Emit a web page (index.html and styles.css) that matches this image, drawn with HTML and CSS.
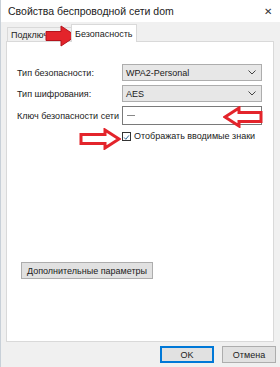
FILE: index.html
```html
<!DOCTYPE html>
<html lang="ru">
<head>
  <meta charset="UTF-8" />
  <title>Свойства беспроводной сети dom</title>
  <link rel="stylesheet" href="styles.css">
</head>
<body>
  <div class="window">
    <div class="titlebar">
      <span class="title">Свойства беспроводной сети dom</span>
      <span class="close">&#x2715;</span>
    </div>

    <div class="tabs">
      <div class="tab">Подключение</div>
      <div class="tab selected">Безопасность</div>
    </div>

    <div class="panel">
      <div class="form">
        <label class="label">Тип безопасности:</label>
        <div class="select">
          <span>WPA2-Personal</span>
          <svg class="chevron" width="8" height="5" viewBox="0 0 8 5"><path d="M0.5 0.5 L4 4 L7.5 0.5" fill="none" stroke="#444" stroke-width="1"/></svg>
        </div>

        <label class="label">Тип шифрования:</label>
        <div class="select">
          <span>AES</span>
          <svg class="chevron" width="8" height="5" viewBox="0 0 8 5"><path d="M0.5 0.5 L4 4 L7.5 0.5" fill="none" stroke="#444" stroke-width="1"/></svg>
        </div>

        <label class="label">Ключ безопасности сети</label>
        <div class="input"><span class="masked"></span></div>

        <div></div>
        <div class="check-row">
          <span class="checkbox">
            <svg width="9" height="9" viewBox="0 0 9 9"><path d="M1.5 4.5 L3.6 6.8 L7.6 1.8" fill="none" stroke="#1e5a8a" stroke-width="1.2"/></svg>
          </span>
          <span>Отображать вводимые знаки</span>
        </div>
      </div>

      <button class="btn advanced">Дополнительные параметры</button>
    </div>

    <div class="footer">
      <button class="btn default">OK</button>
      <button class="btn">Отмена</button>
    </div>

    <!-- красные стрелки поверх скриншота -->
    <svg class="arrow arrow-tab" width="32" height="22" viewBox="0 0 32 22">
      <path d="M1 6.5 H16 V1 L31 11 L16 21 V15.5 H1 Z" fill="#e3242b" stroke="#b5121b" stroke-width="1"/>
    </svg>
    <svg class="arrow arrow-key" width="40" height="22" viewBox="0 0 40 22">
      <path d="M2 11 L16 2 V6.5 H38 V15.5 H16 V20 Z" fill="#fff" stroke="#e3242b" stroke-width="3" stroke-linejoin="miter"/>
    </svg>
    <svg class="arrow arrow-check" width="42" height="22" viewBox="0 0 42 22">
      <path d="M40 11 L26 2 V6.5 H2 V15.5 H26 V20 Z" fill="#fff" stroke="#e3242b" stroke-width="3" stroke-linejoin="miter"/>
    </svg>
  </div>
</body>
</html>
```

FILE: styles.css
```css
html, body {
  margin: 0;
  padding: 0;
}

body {
  font-family: "Liberation Sans", Arial, sans-serif;
  font-size: 9px;
  color: #1a1a1a;
  background: #f0f0f0;
}

.window {
  position: relative;
  width: 280px;
  height: 367px;
  background: #f0f0f0;
  overflow: hidden;
  display: flex;
  flex-direction: column;
  border-left: 1px solid #c8d0d8;
  box-sizing: border-box;
}

.titlebar {
  height: 22px;
  background: #fff;
  display: flex;
  align-items: center;
  justify-content: space-between;
  padding: 0 8px 0 7px;
}

.title {
  font-size: 10.5px;
  color: #222;
}

.close {
  font-size: 10px;
  color: #333;
}

.tabs {
  display: flex;
  align-items: flex-end;
  height: 20px;
  padding-left: 6px;
  margin-bottom: -1px;
}

.tab {
  height: 14px;
  line-height: 14px;
  padding: 0 3px;
  border: 1px solid #d9d9d9;
  border-bottom: none;
  background: #f0f0f0;
  color: #222;
}

.tab.selected {
  height: 17px;
  line-height: 18px;
  background: #fff;
  margin-left: -1px;
  padding: 0 3px;
  position: relative;
  z-index: 1;
}

.panel {
  margin: 0 6px 0 5px;
  height: 301px;
  background: #fff;
  border: 1px solid #d9d9d9;
  box-sizing: border-box;
  display: flex;
  flex-direction: column;
  padding: 22px 10px 62px 10px;
}

.form {
  display: grid;
  grid-template-columns: 105px 140px;
  row-gap: 4px;
  align-items: center;
}

.label {
  color: #222;
}

.select {
  height: 17px;
  box-sizing: border-box;
  border: 1px solid #adadad;
  background: #e7e7e7;
  display: flex;
  align-items: center;
  justify-content: space-between;
  padding: 0 5px 0 3px;
}

.input {
  height: 19px;
  box-sizing: border-box;
  border: 1px solid #7a7a7a;
  background: #fff;
  display: flex;
  align-items: center;
  padding-left: 4px;
}

.masked {
  width: 8px;
  height: 1px;
  background: #888;
}

.check-row {
  display: flex;
  align-items: center;
  gap: 3px;
  margin-top: 2px;
}

.checkbox {
  width: 9px;
  height: 9px;
  border: 1px solid #333;
  box-sizing: border-box;
  display: flex;
  background: #fff;
}

.btn {
  font-family: inherit;
  font-size: 9px;
  color: #222;
  background: #e1e1e1;
  border: 1px solid #adadad;
  height: 17px;
  padding: 0;
  box-sizing: border-box;
}

.advanced {
  margin-top: auto;
  margin-left: 4px;
  width: 132px;
}

.footer {
  display: flex;
  justify-content: flex-end;
  gap: 8px;
  padding: 4px 4px 0 0;
}

.footer .btn {
  width: 54px;
}

.btn.default {
  border: 1px solid #0078d7;
  box-shadow: inset 0 0 0 1px #0078d7;
}

.arrow {
  position: absolute;
}

.arrow-tab {
  left: 44px;
  top: 25px;
}

.arrow-key {
  left: 222px;
  top: 106px;
}

.arrow-check {
  left: 78px;
  top: 128px;
}
```
